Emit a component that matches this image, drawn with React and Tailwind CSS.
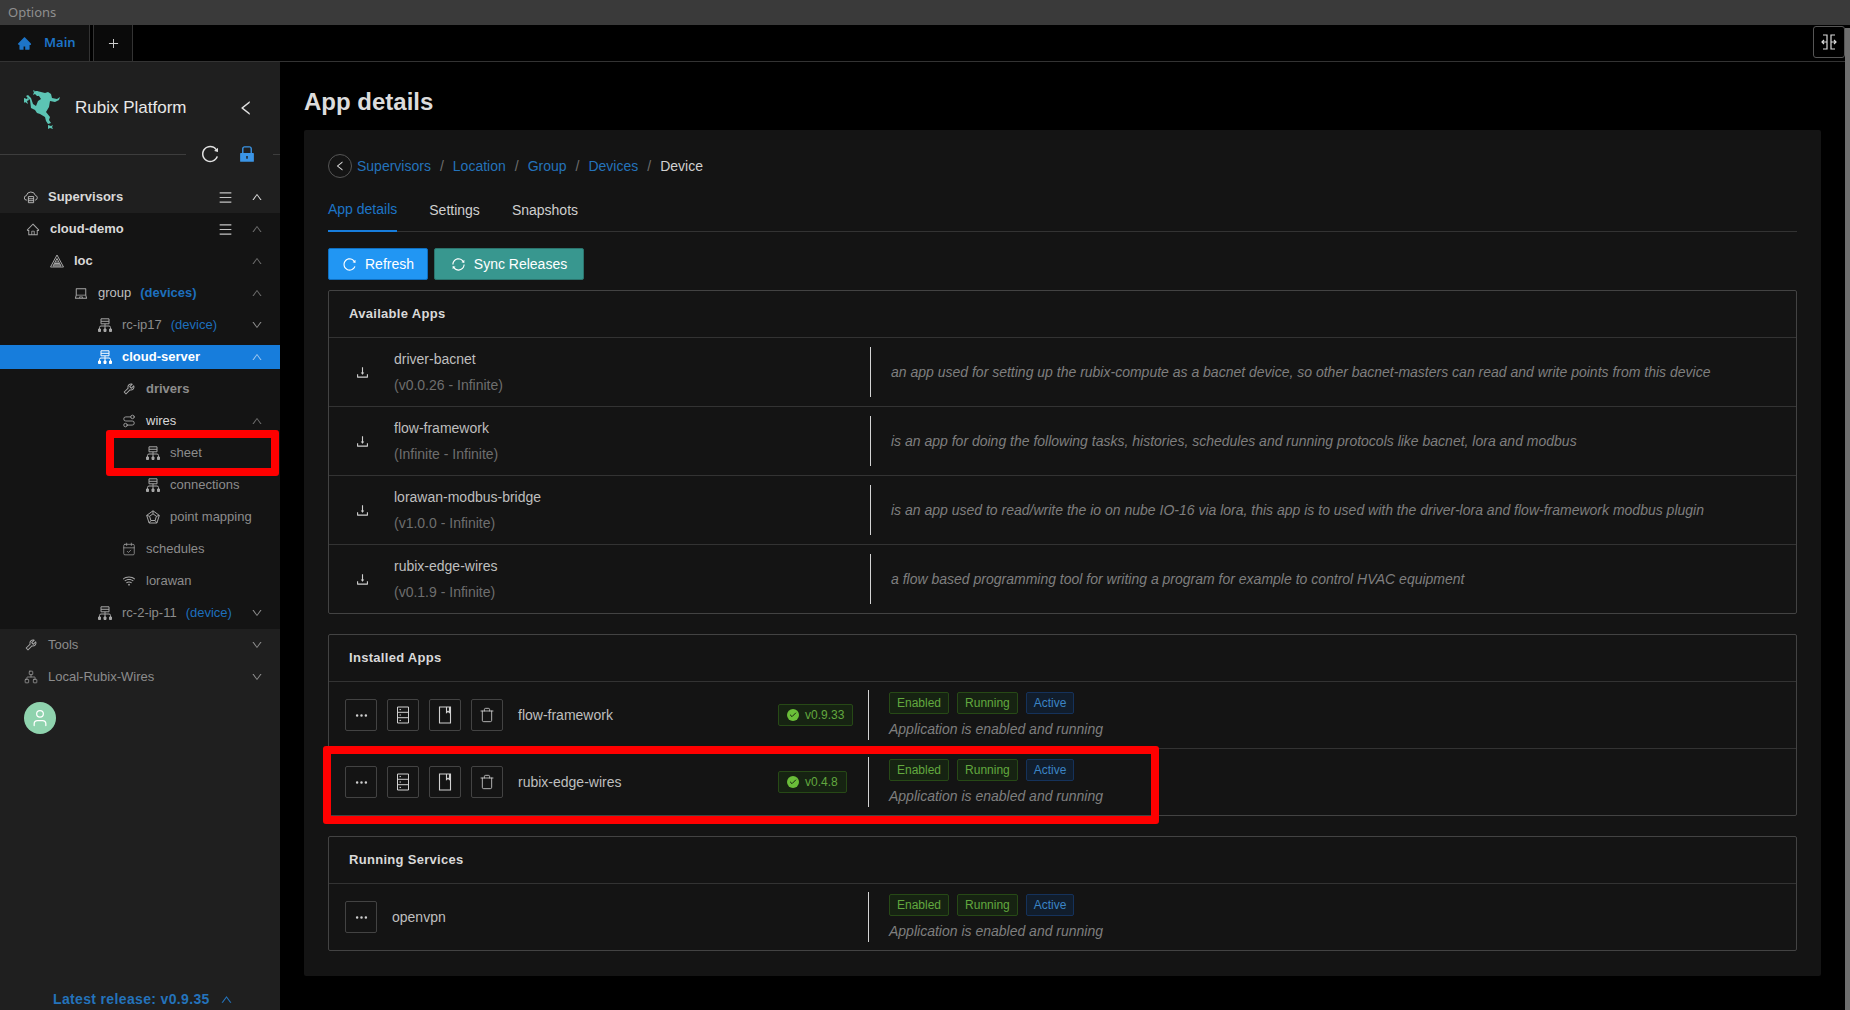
import {
  AiFillHome,
  AiFillLock,
  AiOutlineDown,
  AiOutlineDownload,
  AiOutlineHome,
  AiOutlineLaptop,
  AiOutlineLeft,
  AiOutlineMenu,
  AiOutlinePlus,
  AiOutlineReload,
  AiOutlineSync,
  AiOutlineTool,
  AiOutlineUp,
  AiOutlineWifi,
} from "react-icons/ai";
import { CalendarCheck, Check, Ellipsis, Network, Route, Trash, User } from "lucide-react";

function Frog() {
  return (
    <svg viewBox="0 0 36 42" className="h-[42px] w-9 text-[#5cc4b4]" fill="currentColor">
      <path d="M21 6l3-1 3 2 1 4 5 1 3-2-1 3-4 2-5-1-1 6-3 5 4 5-1 3 2 3-3 1-2-3-1-4-5-3-3-1-2-3-4-2-1-8-4-4 2-1 3 3 2 6 3 2 2-5 3-2-2-3-3-2-1-3 2 0z" />
      <path d="M10 3l1 2 3-1-1 2 2 3-2 0-2-2-2 1 1-3-1-1z" />
      <path d="M0 11l3 1 1-2 1 3-2 1 1 3-3-2-1 1z" />
      <path d="M24 38l3 1 2-1-1 2 1 2-3-1-2 1z" />
    </svg>
  );
}

function TreeBox() {
  return (
    <svg viewBox="0 0 14 14" className="h-[14px] w-[14px]" fill="none" stroke="currentColor" strokeWidth="1">
      <path d="M3 .8h8v5H3zM3 3.3h8M7 5.8v2M1.5 12V9.5a1.5 1.5 0 0 1 1.5-1.5h8a1.5 1.5 0 0 1 1.5 1.5V12M7 8v4" />
      <path d="M.5 11h2v2.5h-2zM6 11h2v2.5H6zM11.5 11h2v2.5h-2z" fill="currentColor" />
    </svg>
  );
}

function CloudBox() {
  return (
    <svg viewBox="0 0 16 14" className="h-[14px] w-[14px]" fill="none" stroke="currentColor" strokeWidth="1">
      <path d="M3.5 10.5H3A2.5 2.5 0 0 1 2.7 5.5 5.3 5.3 0 0 1 13 5.2a2.7 2.7 0 0 1 0 5.3h-.5" />
      <path d="M5 6.5h6v7H5zM5 9h6M5 11.2h6" />
    </svg>
  );
}

function LocIcon() {
  return (
    <svg viewBox="0 0 14 14" className="h-[14px] w-[14px]" fill="none" stroke="currentColor" strokeWidth="1">
      <path d="M7 1l6.5 12H.5zM7 4.5L11 12H3zM4.5 9.5h5M3.8 10.8h6.4M5.4 8h3.2" />
    </svg>
  );
}

function PentagonIcon() {
  return (
    <svg viewBox="0 0 14 14" className="h-[14px] w-[14px]" fill="none" stroke="currentColor" strokeWidth="1">
      <path d="M7 .8l6.3 4.6-2.4 7.6H3.1L.7 5.4zM7 3.8l3.4 2.5-1.3 4.2H4.9L3.6 6.3zM7 .8v3M13.3 5.4l-2.9.9M10.9 13l-1.8-2.5M3.1 13l1.8-2.5M.7 5.4l2.9.9" />
    </svg>
  );
}

function ExpandIcon() {
  return (
    <svg viewBox="0 0 16 16" className="h-4 w-4" fill="none" stroke="currentColor" strokeWidth="1.2">
      <path d="M2 1h4v14H2M14 1h-4v14h4M6 8H1M3 6L1 8l2 2M10 8h5M13 6l2 2-2 2" />
    </svg>
  );
}

function ServerIcon() {
  return (
    <svg viewBox="0 0 14 18" className="h-[18px] w-[14px]" fill="none" stroke="currentColor" strokeWidth="1">
      <path d="M1.5 1h11v16h-11zM1.5 6.3h11M1.5 11.7h11M3.5 3.6h1.5M3.5 9h1.5M3.5 14.4h1.5" />
    </svg>
  );
}

function BookIcon() {
  return (
    <svg viewBox="0 0 14 18" className="h-[18px] w-[14px]" fill="none" stroke="currentColor" strokeWidth="1.1">
      <path d="M1.5 1h11v16h-11zM8.5 1v5.5l1.5-1.2 1.5 1.2V1" />
    </svg>
  );
}

const navRows = [
  { label: "cloud-demo", pl: "pl-[26px]", icon: <AiOutlineHome size={15} />, text: "font-bold text-[#d9d9d9]", menu: true, open: true },
  { label: "loc", pl: "pl-[50px]", icon: <LocIcon />, text: "font-bold text-[#d9d9d9]", open: true },
  { label: "group", note: "(devices)", noteBold: true, pl: "pl-[74px]", icon: <AiOutlineLaptop size={15} />, text: "text-[#bfbfbf]", open: true },
  { label: "rc-ip17", note: "(device)", pl: "pl-[98px]", icon: <TreeBox />, text: "text-[#8c8c8c]", open: false, dim: true },
  { label: "cloud-server", pl: "pl-[98px]", icon: <TreeBox />, text: "font-bold text-white", open: true, active: true },
  { label: "drivers", pl: "pl-[122px]", icon: <AiOutlineTool size={14} />, text: "font-bold text-[#8c8c8c]" },
  { label: "wires", pl: "pl-[122px]", icon: <Route size={14} strokeWidth={1.5} />, text: "text-[#d9d9d9]", open: true },
  { label: "sheet", pl: "pl-[146px]", icon: <TreeBox />, text: "text-[#8c8c8c]", marked: true },
  { label: "connections", pl: "pl-[146px]", icon: <TreeBox />, text: "text-[#8c8c8c]" },
  { label: "point mapping", pl: "pl-[146px]", icon: <PentagonIcon />, text: "text-[#8c8c8c]" },
  { label: "schedules", pl: "pl-[122px]", icon: <CalendarCheck size={14} strokeWidth={1.25} />, text: "text-[#8c8c8c]" },
  { label: "lorawan", pl: "pl-[122px]", icon: <AiOutlineWifi size={14} />, text: "text-[#8c8c8c]" },
  { label: "rc-2-ip-11", note: "(device)", pl: "pl-[98px]", icon: <TreeBox />, text: "text-[#8c8c8c]", open: false },
];

function NavRow({ row }) {
  return (
    <div className="relative h-8 py-1">
      <div className={`flex h-6 items-center pr-[17px] ${row.pl} ${row.active ? "bg-[#177ddc]" : ""}`}>
        <span className={`mr-[10px] flex w-[14px] justify-center ${row.active ? "text-white" : "text-[#a6a6a6]"}`}>{row.icon}</span>
        <span className={`text-[13px] ${row.text}`}>{row.label}</span>
        {row.note && (
          <span className={`ml-[9px] text-[13px] text-[#1d6fbd] ${row.noteBold ? "font-bold" : ""}`}>{row.note}</span>
        )}
        <span className="ml-auto flex items-center gap-[18px]">
          {row.menu && <AiOutlineMenu size={15} className="text-[#c4c4c4]" />}
          {row.open === true && <AiOutlineUp size={12} className={row.active ? "text-[#9cc6ee]" : "text-[#6b6b6b]"} />}
          {row.open === false && <AiOutlineDown size={12} className="text-[#8c8c8c]" />}
        </span>
      </div>
      {row.marked && (
        <div className="absolute bottom-[-7px] left-[106px] top-[-7px] w-[173px] rounded-[3px] border-8 border-[#ff0000]" />
      )}
    </div>
  );
}

function Sidebar() {
  return (
    <aside className="flex w-[280px] shrink-0 flex-col bg-[#1f1f1f]">
      <div className="flex items-center pl-6 pt-[25px]">
        <Frog />
        <span className="ml-[15px] text-[17px] text-[#e8e8e8]">Rubix Platform</span>
        <AiOutlineLeft size={18} className="ml-[51px] text-[#e0e0e0]" />
      </div>
      <div className="mt-[9px] flex h-8 items-center">
        <div className="h-px w-[186px] bg-[#3d3d3d]" />
        <AiOutlineReload size={20} className="ml-[14px] text-[#e0e0e0]" />
        <AiFillLock size={20} className="ml-[17px] text-[#3b95e6]" />
        <div className="ml-[16px] h-px flex-1 bg-[#3d3d3d]" />
      </div>
      <div className="mt-[11px] flex h-8 items-center pl-6 pr-[17px]">
        <span className="mr-[10px] flex w-[14px] justify-center text-[#c4c4c4]">
          <CloudBox />
        </span>
        <span className="text-[13px] font-bold text-[#d9d9d9]">Supervisors</span>
        <span className="ml-auto flex items-center gap-[18px]">
          <AiOutlineMenu size={15} className="text-[#c4c4c4]" />
          <AiOutlineUp size={12} className="text-[#d9d9d9]" />
        </span>
      </div>
      <div className="bg-[#141414]">
        {navRows.map((row) => (
          <NavRow key={row.label} row={row} />
        ))}
      </div>
      <div className="flex h-8 items-center pl-6 pr-[17px]">
        <span className="mr-[10px] flex w-[14px] justify-center text-[#a6a6a6]">
          <AiOutlineTool size={14} />
        </span>
        <span className="text-[13px] text-[#8c8c8c]">Tools</span>
        <AiOutlineDown size={12} className="ml-auto text-[#8c8c8c]" />
      </div>
      <div className="flex h-8 items-center pl-6 pr-[17px]">
        <span className="mr-[10px] flex w-[14px] justify-center text-[#a6a6a6]">
          <Network size={14} strokeWidth={1.25} />
        </span>
        <span className="text-[13px] text-[#8c8c8c]">Local-Rubix-Wires</span>
        <AiOutlineDown size={12} className="ml-auto text-[#8c8c8c]" />
      </div>
      <div className="ml-6 mt-[9px] flex h-8 w-8 items-center justify-center rounded-full bg-[#8fd3ae]">
        <User size={20} strokeWidth={1.5} className="text-white" />
      </div>
      <div className="mt-auto flex h-5 items-center pb-[2px] pl-[53px]">
        <span className="text-sm font-bold tracking-[0.35px] text-[#2473bb]">Latest release: v0.9.35</span>
        <AiOutlineUp size={13} className="ml-[10px] text-[#2473bb]" />
      </div>
    </aside>
  );
}

function Tag({ color, children }) {
  const styles = {
    green: "border-[#274916] bg-[#162312] text-[#62a83f]",
    blue: "border-[#15325b] bg-[#111d2c] text-[#3b84c4]",
  };
  return (
    <span className={`flex h-[22px] items-center rounded-[2px] border px-[7px] text-xs ${styles[color]}`}>{children}</span>
  );
}

function StatusColumn() {
  return (
    <div className="ml-5 flex flex-col">
      <div className="flex gap-2">
        <Tag color="green">Enabled</Tag>
        <Tag color="green">Running</Tag>
        <Tag color="blue">Active</Tag>
      </div>
      <p className="mt-[5px] text-sm italic text-[#7f7f7f]">Application is enabled and running</p>
    </div>
  );
}

function ActionBtn({ children }) {
  return (
    <button className="flex h-8 w-8 items-center justify-center rounded-[2px] border border-[#434343] text-[#d0d0d0]">
      {children}
    </button>
  );
}

function Divider() {
  return <div className="h-[50px] w-px shrink-0 bg-[#d4d4d4]" />;
}

function Panel({ title, children }) {
  return (
    <section className="rounded-[2px] border border-[#434343]">
      <h2 className="flex h-[46px] items-center pl-5 text-[13px] font-bold tracking-[0.3px] text-[#d9d9d9]">{title}</h2>
      {children}
    </section>
  );
}

const availableApps = [
  {
    name: "driver-bacnet",
    version: "(v0.0.26 - Infinite)",
    description: "an app used for setting up the rubix-compute as a bacnet device, so other bacnet-masters can read and write points from this device",
  },
  {
    name: "flow-framework",
    version: "(Infinite - Infinite)",
    description: "is an app for doing the following tasks, histories, schedules and running protocols like bacnet, lora and modbus",
  },
  {
    name: "lorawan-modbus-bridge",
    version: "(v1.0.0 - Infinite)",
    description: "is an app used to read/write the io on nube IO-16 via lora, this app is to used with the driver-lora and flow-framework modbus plugin",
  },
  {
    name: "rubix-edge-wires",
    version: "(v0.1.9 - Infinite)",
    description: "a flow based programming tool for writing a program for example to control HVAC equipment",
  },
];

const installedApps = [
  { name: "flow-framework", version: "v0.9.33" },
  { name: "rubix-edge-wires", version: "v0.4.8", marked: true },
];

function AppDetails() {
  return (
    <main className="flex-1 px-6">
      <h1 className="flex h-[68px] items-center pt-[12px] text-2xl font-bold text-[#dcdcdc]">App details</h1>
      <div className="h-[846px] rounded-[2px] bg-[#141414] px-6 pt-6">
        <div className="flex h-6 items-center text-sm">
          <span className="flex h-6 w-6 items-center justify-center rounded-full border border-[#555] text-[#d9d9d9]">
            <AiOutlineLeft size={12} />
          </span>
          <a className="ml-[5px] text-[#2473bb]">Supervisors</a>
          <span className="mx-[9px] text-[#6e6e6e]">/</span>
          <a className="text-[#2473bb]">Location</a>
          <span className="mx-[9px] text-[#6e6e6e]">/</span>
          <a className="text-[#2473bb]">Group</a>
          <span className="mx-[9px] text-[#6e6e6e]">/</span>
          <a className="text-[#2473bb]">Devices</a>
          <span className="mx-[9px] text-[#6e6e6e]">/</span>
          <span className="text-[#d0d0d0]">Device</span>
        </div>
        <div className="mt-[10px] flex h-[44px] gap-8 border-b border-[#333] text-sm">
          <span className="-mb-px flex items-center border-b-2 border-[#177ddc] text-[#1d74c7]">App details</span>
          <span className="flex items-center text-[#cfcfcf]">Settings</span>
          <span className="flex items-center text-[#cfcfcf]">Snapshots</span>
        </div>
        <div className="mt-4 flex gap-[6px]">
          <button className="flex h-8 w-[100px] items-center justify-center gap-2 rounded-[2px] border border-[#0f6fc0] bg-[#2196f3] text-sm text-white">
            <AiOutlineReload size={15} />
            Refresh
          </button>
          <button className="flex h-8 w-[150px] items-center justify-center gap-2 rounded-[2px] border border-[#2b746d] bg-[#38978f] text-sm text-white">
            <AiOutlineSync size={15} />
            Sync Releases
          </button>
        </div>

        <div className="mt-[10px] flex flex-col gap-5">
          <Panel title="Available Apps">
            {availableApps.map((app) => (
              <div key={app.name} className="flex h-[69px] items-center border-t border-[#333]">
                <div className="flex w-[541px] items-center pl-[26px] text-sm">
                  <AiOutlineDownload size={15} className="text-[#cfcfcf]" />
                  <div className="ml-[24px] flex flex-col gap-2 leading-[18px]">
                    <span className="text-[#bfbfbf]">{app.name}</span>
                    <span className="text-[#6e6e6e]">{app.version}</span>
                  </div>
                </div>
                <Divider />
                <p className="ml-5 text-sm italic text-[#7f7f7f]">{app.description}</p>
              </div>
            ))}
          </Panel>

          <Panel title="Installed Apps">
            {installedApps.map((app) => (
              <div key={app.name} className="relative flex h-[67px] items-center border-t border-[#333]">
                <div className="flex w-[539px] items-center gap-[10px] pl-4">
                  <ActionBtn>
                    <Ellipsis size={15} />
                  </ActionBtn>
                  <ActionBtn>
                    <ServerIcon />
                  </ActionBtn>
                  <ActionBtn>
                    <BookIcon />
                  </ActionBtn>
                  <ActionBtn>
                    <Trash size={16} strokeWidth={1.25} />
                  </ActionBtn>
                  <span className="ml-[5px] w-[250px] text-sm text-[#bfbfbf]">{app.name}</span>
                  <span className="flex h-[22px] items-center gap-[6px] rounded-[2px] border border-[#274916] bg-[#162312] px-2 text-xs text-[#62a83f]">
                    <span className="flex h-3 w-3 items-center justify-center rounded-full bg-[#6abe39]">
                      <Check size={8} strokeWidth={3} className="text-[#162312]" />
                    </span>
                    {app.version}
                  </span>
                </div>
                <Divider />
                <StatusColumn />
                {app.marked && (
                  <div className="absolute bottom-[-9px] left-[-6px] top-[-3px] w-[836px] rounded-[3px] border-8 border-[#ff0000]" />
                )}
              </div>
            ))}
          </Panel>

          <Panel title="Running Services">
            <div className="flex h-[67px] items-center border-t border-[#333]">
              <div className="flex w-[539px] items-center pl-4">
                <ActionBtn>
                  <Ellipsis size={15} />
                </ActionBtn>
                <span className="ml-[15px] text-sm text-[#bfbfbf]">openvpn</span>
              </div>
              <Divider />
              <StatusColumn />
            </div>
          </Panel>
        </div>
      </div>
    </main>
  );
}

export default function App() {
  return (
    <div className="flex h-[1010px] w-[1850px] flex-col overflow-hidden bg-black [font-family:'Liberation_Sans',sans-serif]">
      <div className="flex h-[25px] shrink-0 items-center bg-[#3a3a3a] pl-2 text-[13px] text-[#8f8f8f] [font-family:'Noto_Sans',sans-serif]">
        Options
      </div>
      <div className="flex min-h-0 flex-1">
        <div className="flex min-w-0 flex-1 flex-col">
          <div className="flex h-[37px] shrink-0 border-b border-[#333]">
            <div className="flex w-[90px] items-center border-r border-[#333] bg-[#101010] pl-[17px] text-[13px] font-semibold text-[#1d74c7] [font-family:'Noto_Sans',sans-serif]">
              <AiFillHome size={15} className="mr-[12px]" />
              Main
            </div>
            <div className="ml-[3px] flex w-[40px] items-center justify-center border-x border-[#333] bg-[#0a0a0a] text-[#cfcfcf]">
              <AiOutlinePlus size={13} />
            </div>
            <div className="ml-auto mt-px flex h-8 w-8 items-center justify-center rounded-[3px] border border-[#555] text-[#d9d9d9]">
              <ExpandIcon />
            </div>
          </div>
          <div className="flex min-h-0 flex-1">
            <Sidebar />
            <AppDetails />
          </div>
        </div>
        <div className="mt-[3px] w-[5px] shrink-0 bg-[#6e6e6e]" />
      </div>
    </div>
  );
}
